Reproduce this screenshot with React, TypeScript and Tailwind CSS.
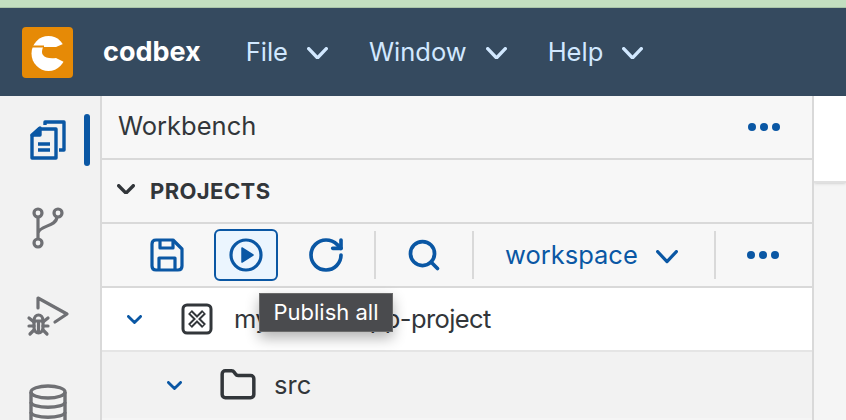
import { Folder, Search, RotateCw } from "lucide-react";

const sans = "font-['Inter','Noto_Sans',sans-serif]";

function Chev({ w, stroke = 3, className = "" }: { w: number; stroke?: number; className?: string }) {
    const h = w * 0.6;
    return (
        <svg width={w} height={h} viewBox={`0 0 ${w} ${h}`} fill="none" stroke="currentColor" strokeWidth={stroke} strokeLinecap="round" strokeLinejoin="round" className={`shrink-0 ${className}`}>
            <path d={`M${stroke / 2} ${stroke / 2} L${w / 2} ${h - stroke / 2} L${w - stroke / 2} ${stroke / 2}`} />
        </svg>
    );
}

function Logo() {
    return (
        <svg width="51" height="51" viewBox="0 0 51 51" className="shrink-0">
            <rect width="51" height="51" rx="4" fill="#e68a06" />
            <ellipse cx="26.5" cy="26.5" rx="17" ry="17.5" fill="#fff" />
            <path d="M48 14 L34 20 L21 20 Q19 26 21 28 Q24 32 34 31 L48 38 Z" fill="#e68a06" />
            <rect x="8" y="18.5" width="14" height="2" fill="#e68a06" />
        </svg>
    );
}

function MenuItem({ label, className = "" }: { label: string; className?: string }) {
    return (
        <div className={`flex items-center gap-[19px] text-[#d1e8ff] text-[25.5px] ${className}`}>
            <span>{label}</span>
            <Chev w={21} stroke={3.4} className="mt-[2px]" />
        </div>
    );
}

function Dots() {
    return (
        <div className="flex gap-1 items-center">
            <span className="w-2 h-2 rounded-full bg-[#0a57a4]" />
            <span className="w-2 h-2 rounded-full bg-[#0a57a4]" />
            <span className="w-2 h-2 rounded-full bg-[#0a57a4]" />
        </div>
    );
}

function SideBar() {
    return (
        <div className="w-[102px] shrink-0 bg-[#f2f2f2] border-r-2 border-[#d9d9d9] flex flex-col items-center relative overflow-hidden">
            <svg width="36" height="40" viewBox="0 0 36 40" fill="none" stroke="#0a57a4" strokeWidth="3.4" strokeLinejoin="round" className="mt-[24px] mr-[4px] shrink-0">
                <path d="M15 5 V2 H34 V30 H29" />
                <path d="M2 16 L9 9 H26 V38 H2 Z" />
                <path d="M2 15 H10 V8 Z" fill="#0a57a4" />
                <path d="M8 24 H20 M8 30 H20" />
            </svg>
            <svg width="32" height="42" viewBox="0 0 32 42" fill="none" stroke="#6f7074" strokeWidth="3.2" className="mt-[47px] mr-[4px] shrink-0">
                <circle cx="6" cy="6" r="4" />
                <circle cx="26" cy="6" r="4" />
                <circle cx="6" cy="36" r="4" />
                <path d="M6 10 V32 M6 26 C8 18 24 20 25 10" />
            </svg>
            <svg width="44" height="44" viewBox="0 0 44 44" fill="none" stroke="#6f7074" strokeWidth="3.2" strokeLinecap="round" strokeLinejoin="round" className="mt-[45px] mr-[4px] shrink-0">
                <path d="M12 14 V4 L41 20 L29 28" />
                <path d="M8 27 C8 19 17 19 17 27 V33 C17 41 8 41 8 33 Z" />
                <path d="M8 27 H17 M12.5 27 V38" />
                <path d="M3 24 L8 28 M22 24 L17 28 M3 32 H8 M22 32 H17 M4 40 L8 36 M21 40 L17 36" />
            </svg>
            <svg width="38" height="42" viewBox="0 0 38 42" fill="none" stroke="#6f7074" strokeWidth="3.4" className="mt-[46px] mr-[4px] shrink-0">
                <ellipse cx="19" cy="8" rx="17" ry="6" />
                <path d="M2 8 V36 C2 44 36 44 36 36 V8" />
                <path d="M2 18 C2 25 36 25 36 18 M2 28 C2 35 36 35 36 28" />
            </svg>
            <span className="absolute left-[84px] top-[18px] w-[6px] h-[52px] rounded-full bg-[#0a57a4]" />
        </div>
    );
}

function Toolbar() {
    return (
        <div className="h-[64px] shrink-0 bg-[#f7f7f7] border-b-2 border-[#d9d9d9] flex items-center pl-[48px] text-[#0a57a4]">
            <svg width="34" height="34" viewBox="0 0 34 34" fill="none" stroke="#0a57a4" strokeWidth="3.2" strokeLinejoin="round" className="shrink-0">
                <path d="M2 6 Q2 2 6 2 H23 L32 11 V28 Q32 32 28 32 H6 Q2 32 2 28 Z" />
                <path d="M10 2 V10 H23 V3 M9 32 V20 H25 V32" />
            </svg>
            <div className="ml-[30px] w-[64px] h-[52px] shrink-0 rounded-md border-2 border-[#0a57a4] bg-[#ebf5fe] flex items-center justify-center">
                <svg width="34" height="34" viewBox="0 0 34 34">
                    <circle cx="17" cy="17" r="15" fill="none" stroke="#0a57a4" strokeWidth="3.2" />
                    <path d="M13 10 L24 17 L13 24 Z" fill="#0a57a4" stroke="#0a57a4" strokeWidth="1.5" strokeLinejoin="round" />
                </svg>
            </div>
            <RotateCw size={40} strokeWidth={2.2} className="ml-[28px] shrink-0" />
            <span className="ml-[28px] w-[2px] h-[48px] shrink-0 bg-[#d9d9d9]" />
            <Search size={36} strokeWidth={2.5} className="ml-[30px] shrink-0" />
            <span className="ml-[30px] w-[2px] h-[48px] shrink-0 bg-[#d9d9d9]" />
            <span className="ml-[31px] text-[25.5px]">workspace</span>
            <Chev w={22} stroke={3.2} className="ml-[18px] mt-1" />
            <span className="ml-[36px] w-[2px] h-[48px] shrink-0 bg-[#d9d9d9]" />
            <div className="ml-[31px]"><Dots /></div>
        </div>
    );
}

export default function App() {
    return (
        <div className={`w-[846px] h-[420px] overflow-hidden flex flex-col bg-[#f5f5f5] ${sans}`}>
            <div className="h-2 shrink-0 bg-[#c3dfc0] border-b border-[#a9c4a8]" />
            <div className="h-[88px] shrink-0 bg-[#354a5f] flex items-center pl-[22px]">
                <Logo />
                <span className="ml-[30px] text-white font-bold text-[27px]">codbex</span>
                <div className="ml-[45px] flex">
                    <MenuItem label="File" />
                    <MenuItem label="Window" className="ml-[41px]" />
                    <MenuItem label="Help" className="ml-[41px]" />
                </div>
            </div>
            <div className="flex flex-1 min-h-0">
                <SideBar />
                <div className="w-[712px] shrink-0 border-r-2 border-[#d9d9d9] flex flex-col relative">
                    <div className="h-[64px] shrink-0 bg-[#f7f7f7] border-b-2 border-[#d9d9d9] flex items-center justify-between pl-[16px] pr-[32px]">
                        <span className="text-[25.5px] text-[#32363a] -mt-[2px]">Workbench</span>
                        <Dots />
                    </div>
                    <div className="h-[64px] shrink-0 bg-[#f7f7f7] border-b-2 border-[#d9d9d9] flex items-center pl-[15px]">
                        <Chev w={18} stroke={3.4} className="text-[#32363a] -mt-[4px]" />
                        <span className="ml-[15px] text-[22px] font-bold tracking-[0.4px] text-[#32363a]">PROJECTS</span>
                    </div>
                    <Toolbar />
                    <div className="h-[64px] shrink-0 bg-white border-b-2 border-[#e5e5e5] flex items-center pl-[25px] text-[#32363a]">
                        <Chev w={15} stroke={2.8} className="text-[#0a57a4]" />
                        <svg width="32" height="32" viewBox="0 0 32 32" fill="none" stroke="#32363a" className="ml-[39px] shrink-0">
                            <rect x="2" y="2" width="28" height="28" rx="4" strokeWidth="3" />
                            <path d="M9 9 L23 23 M23 9 L9 23" strokeWidth="5.5" />
                            <path d="M10 10 L22 22 M22 10 L10 22" strokeWidth="1.6" stroke="#fff" />
                        </svg>
                        <span className="ml-[21px] text-[25.5px] tracking-[-0.6px]">my-demo-app-project</span>
                    </div>
                    <div className="h-[66px] shrink-0 bg-[#f2f2f2] flex items-center pl-[65px] text-[#32363a]">
                        <Chev w={15} stroke={2.8} className="text-[#0a57a4]" />
                        <Folder size={38} strokeWidth={2.2} className="ml-[37px] shrink-0" />
                        <span className="ml-[17px] text-[25.5px]">src</span>
                    </div>
                    <div className="absolute left-[157px] top-[197px] w-[134px] h-[39px] flex items-center justify-center bg-[#4a4b4e] border border-[#6a6a6a] text-white text-[22px] shadow-[0_6px_14px_rgba(0,0,0,0.3)]">
                        Publish all
                    </div>
                </div>
                <div className="flex-1 min-w-0 flex flex-col">
                    <div className="h-[87px] bg-white border-b-2 border-[#e0e0e0] shadow-sm" />
                </div>
            </div>
        </div>
    );
}
